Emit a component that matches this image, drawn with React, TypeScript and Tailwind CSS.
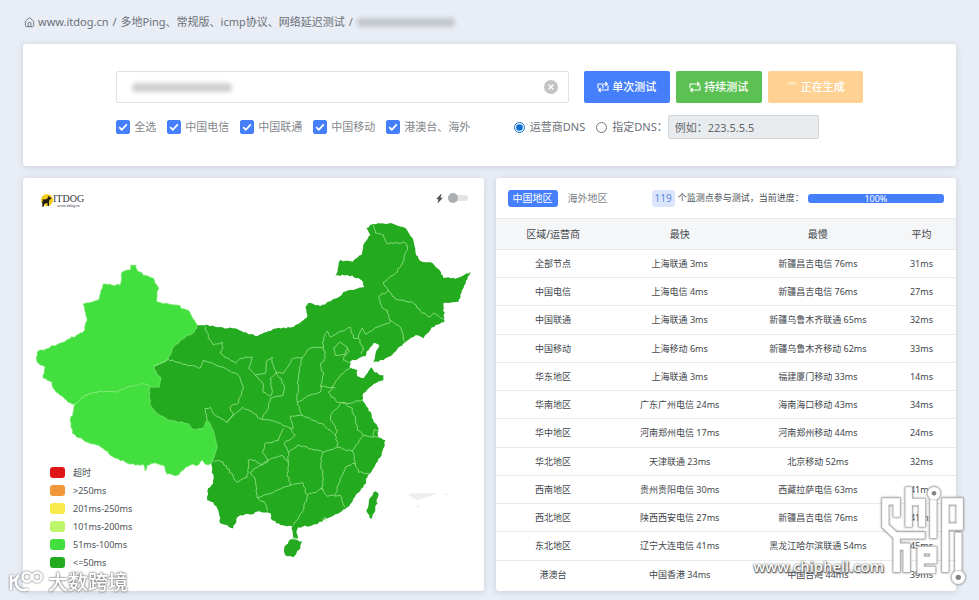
import { LuHouse } from "react-icons/lu";
import { BsLightningChargeFill } from "react-icons/bs";

type Point = [number, number];

const carriers = ["全选", "中国电信", "中国联通", "中国移动", "港澳台、海外"];

const legend = [
  { label: "超时", color: "bg-[#e01515]" },
  { label: ">250ms", color: "bg-[#f1973a]" },
  { label: "201ms-250ms", color: "bg-[#f7ea4a]" },
  { label: "101ms-200ms", color: "bg-[#bdf56b]" },
  { label: "51ms-100ms", color: "bg-[#43df3f]" },
  { label: "<=50ms", color: "bg-[#24aa1f]" },
];

const rows = [
  ["全部节点", "上海联通 3ms", "新疆昌吉电信 76ms", "31ms"],
  ["中国电信", "上海电信 4ms", "新疆昌吉电信 76ms", "27ms"],
  ["中国联通", "上海联通 3ms", "新疆乌鲁木齐联通 65ms", "32ms"],
  ["中国移动", "上海移动 6ms", "新疆乌鲁木齐移动 62ms", "33ms"],
  ["华东地区", "上海联通 3ms", "福建厦门移动 33ms", "14ms"],
  ["华南地区", "广东广州电信 24ms", "海南海口移动 43ms", "34ms"],
  ["华中地区", "河南郑州电信 17ms", "河南郑州移动 44ms", "24ms"],
  ["华北地区", "天津联通 23ms", "北京移动 52ms", "32ms"],
  ["西南地区", "贵州贵阳电信 30ms", "西藏拉萨电信 63ms", "41ms"],
  ["西北地区", "陕西西安电信 27ms", "新疆昌吉电信 76ms", "41ms"],
  ["东北地区", "辽宁大连电信 41ms", "黑龙江哈尔滨联通 54ms", "45ms"],
  ["港澳台", "中国香港 34ms", "中国台湾 44ms", "39ms"],
];

const mainland =
  "197,325 204,325 220,327 237,329 250,334 257,336 273,329 293,327 307,317 305,307 308,303 320,306 337,298 343,292 364,287 362,281 358,278 347,275 335,276 340,260 352,262 361,255 364,243 370,235 366,228 373,224 390,223 405,228 412,238 415,252 420,261 432,263 439,270 443,278 457,278 470,272 463,288 458,302 443,303 444,322 435,325 430,330 423,338 415,335 405,342 393,353 383,360 373,362 375,354 379,345 373,343 369,348 365,356 350,361 349,367 357,370 357,376 363,378 367,373 371,367 374,372 383,375 383,380 373,384 363,393 362,400 368,408 373,420 378,428 378,437 385,440 383,448 380,457 373,468 367,477 363,487 357,493 347,507 335,514 323,520 312,525 298,527 296,532 298,538 293,538 292,530 292,526 283,525 272,520 270,513 258,511 253,514 240,515 237,517 233,528 220,523 218,510 213,502 207,500 208,488 213,483 212,467 212,460 205,445 130,415 130,365";

const xinjiang =
  "130,265 136,265 137,270 143,275 153,278 158,287 157,302 177,305 189,311 197,325 194,332 188,335 182,339 174,346 168,359 154,366 157,375 161,378 159,387 150,386 143,384 127,387 117,392 97,392 85,395 75,404 68,402 58,393 53,388 52,382 43,378 45,367 37,362 37,352 50,347 63,342 83,332 87,320 83,304 98,300 103,284 120,285 122,272 130,270";

const tibet =
  "75,404 85,395 97,392 117,392 127,387 143,384 150,386 149,390 150,405 157,413 167,419 187,423 193,429 203,428 207,420 213,430 217,447 212,460 210,464 205,464 202,460 198,465 190,465 177,475 167,474 163,465 153,463 147,465 145,471 143,464 135,465 127,463 115,458 97,445 87,442 72,433 70,420 73,412";

const islands = [
  "290,539 302,541 300,548 293,557 285,555 284,547",
  "375,491 378,493 375,510 371,519 366,510 370,497",
];

const borders = [
  "168,359 177,362 200,368 203,360 223,367 238,375 243,387 238,403 230,407 233,415 227,422 215,415 210,407 205,408 207,420",
  "154,366 168,359",
  "204,325 208,337 213,345 222,342 223,348 220,353 235,363 240,358 252,357 248,368 255,375 262,382 263,392 270,396 272,392 270,378 276,372",
  "255,375 265,373 267,360 272,357 273,365 276,372",
  "276,372 283,373 293,358 302,357 310,348 323,347 323,338 327,331 330,337 350,327 353,338 358,338 362,328 365,334 377,327 390,322 387,310 382,308 378,297 388,290 383,282 397,272 402,263 407,247 403,242 387,244 383,235 375,233 373,225",
  "388,290 395,299 412,302 420,311 428,317 433,313 444,320",
  "390,320 400,327 405,342",
  "358,338 363,350 361,354",
  "340,342 347,347 345,355 335,355 333,348 340,342",
  "347,347 349,351 345,355 343,360 349,362",
  "323,347 325,357 320,365 323,375 320,386 335,388",
  "350,367 340,375 335,382 332,388 328,392 337,402 350,403 362,400",
  "302,357 298,375 297,402 310,395 320,392 321,386",
  "340,403 338,407 332,412 330,420 337,430 335,435 338,447",
  "342,403 352,408 355,420 357,430 363,435 372,437 378,437",
  "373,437 374,429 378,430",
  "297,402 302,415 320,423 330,430 335,435",
  "302,415 290,416 293,428 290,428",
  "276,372 284,385 283,395 270,398 268,408 262,419",
  "227,422 233,415 242,407 252,412 262,419 280,423 290,428",
  "290,428 295,435 284,443 288,452 288,462 282,455 268,460",
  "283,428 278,440 265,443 262,452 268,460",
  "288,452 297,445 318,450 323,452 337,447 352,451 363,435",
  "323,452 320,463 323,477 322,490",
  "352,451 355,463 345,467 340,478 335,495",
  "355,463 358,472 369,473",
  "307,495 322,488 327,496 340,495 345,507",
  "307,495 303,510 293,525",
  "307,495 302,482 290,485 273,492 257,497",
  "288,462 287,473 290,485",
  "268,460 255,468 250,472 255,480 257,497 265,503 267,511",
  "212,460 223,462 237,482 240,480 247,477 248,460 255,460 262,465 268,460",
  "292,538 298,538",
  "321,520 325,517 326,521",
];

function parse(list: string): Point[] {
  return list.split(" ").map((pair) => pair.split(",").map(Number) as Point);
}

function noise(x: number, y: number) {
  const seed = Math.sin(x * 12.9898 + y * 78.233) * 43758.5453;
  return seed - Math.floor(seed) - 0.5;
}

// Cuts a segment into short steps and nudges each one. The nudge depends only
// on the position, so provinces that share a border also share its wiggle.
function wiggle(a: Point, b: Point): Point[] {
  const steps = Math.max(1, Math.round(Math.hypot(b[0] - a[0], b[1] - a[1]) / 2.5));
  const out: Point[] = [];
  for (let i = 1; i < steps; i++) {
    const x = a[0] + ((b[0] - a[0]) * i) / steps;
    const y = a[1] + ((b[1] - a[1]) * i) / steps;
    const rx = Math.round(x * 10);
    const ry = Math.round(y * 10);
    out.push([x + noise(rx, ry) * 1.8, y + noise(ry, rx) * 1.8]);
  }
  out.push(b);
  return out;
}

function outline(list: string, closed = false) {
  const points = parse(list);
  if (closed) points.push(points[0]);
  const out: Point[] = [points[0]];
  for (let i = 1; i < points.length; i++) {
    out.push(...wiggle(points[i - 1], points[i]));
  }
  return "M" + out.map(([x, y]) => `${x.toFixed(1)} ${y.toFixed(1)}`).join("L") + (closed ? "Z" : "");
}

function ChinaMap() {
  return (
    <svg viewBox="23 214 460 377" className="block w-full" role="img" aria-label="中国地区">
      <path d={outline(mainland, true)} fill="#24aa1f" />
      {islands.map((island) => (
        <path key={island} d={outline(island, true)} fill="#24aa1f" />
      ))}
      <g fill="#43df3f" stroke="#8cec83" strokeWidth="0.6">
        <path d={outline(xinjiang, true)} />
        <path d={outline(tibet, true)} />
      </g>
      <g fill="none" stroke="#9be68f" strokeWidth="0.8" strokeLinejoin="round">
        {borders.map((border) => (
          <path key={border} d={outline(border)} />
        ))}
      </g>
      <path d="M408 495l3-2 26 0-11 4-9 3z" fill="#eeeeee" />
      <path d="M443 494l4-1v2zM416 506l2-2 1 2-2 2z" fill="#eeeeee" />
    </svg>
  );
}

function DogLogo() {
  return (
    <div className="flex items-center">
      <svg viewBox="0 0 26 26" className="size-[13px]">
        <circle cx="14" cy="12" r="12" fill="#f0cd18" />
        <path d="M18 3l1 3 4 2-2 3h-2l-1 5v8h-3v-6l-5 1-2 2v4H4l1-5-1-3 2-5-2-2 4 1 6-1 2-4z" fill="#241c16" />
      </svg>
      <div className="flex flex-col items-center font-['Liberation_Serif',serif] text-[#33373c]">
        <span className="text-[10px] leading-[10px]">ITDOG</span>
        <span className="text-[4px] leading-[3px]">www.itdog.cn</span>
      </div>
    </div>
  );
}

function LoopIcon({ once = false }: { once?: boolean }) {
  return (
    <svg viewBox="0 0 12 12" className="size-[12px]" fill="none" stroke="#fff" strokeWidth="1.100">
      <path d="M1 7.500V3h9M8.300 1l2 2-2 2M11 4.500V9H2M3.700 7l-2 2 2 2" />
      {once && <path d="M6 4.400v3.200M5 4.600h1" />}
    </svg>
  );
}

function Breadcrumb() {
  return (
    <nav className="flex h-11 items-center gap-1 px-[1px] text-[11px] text-[#6b7078]">
      <a href="#" className="flex items-center gap-[3px]">
        <LuHouse className="size-[11px]" />
        www.itdog.cn
      </a>
      <span>/</span>
      <a href="#">多地Ping、常规版、icmp协议、网络延迟测试</a>
      <span>/</span>
      <span className="h-[9px] w-[98px] rounded bg-[#c3c7ce] blur-[2px]" />
    </nav>
  );
}

function QueryForm() {
  return (
    <form className="rounded-[3px] bg-white py-[27px] shadow-[0_1px_6px_rgba(80,95,120,0.22)]">
      <div className="mx-auto flex w-4/5 items-center gap-[6px]">
        <div className="relative mr-[9px] flex-1">
          <input
            aria-label="www.itdog.cn"
            className="block h-8 w-full rounded-[2px] border border-[#dfe1e4] px-4 text-[11px] outline-none"
          />
          <span className="absolute left-4 top-3 h-[9px] w-[100px] rounded bg-[#d0d0d0] blur-[2px]" />
          <button type="button" aria-label="×" className="absolute right-[11px] top-[9px]">
            <svg viewBox="0 0 14 14" className="size-[14px]">
              <circle cx="7" cy="7" r="7" fill="#c2c3c5" />
              <path d="M4.500 4.500l5 5m0-5l-5 5" stroke="#fff" strokeWidth="1.200" />
            </svg>
          </button>
        </div>
        <button type="button" className="flex h-8 w-[86px] items-center justify-center gap-[3px] rounded-[2px] bg-[#467ffb] text-[11px] font-medium text-white">
          <LoopIcon once />
          单次测试
        </button>
        <button type="button" className="flex h-8 w-[86px] items-center justify-center gap-[3px] rounded-[2px] bg-[#5ac152] text-[11px] font-medium text-white">
          <LoopIcon />
          持续测试
        </button>
        <button type="button" className="flex h-8 w-[95px] items-center justify-center gap-[3px] rounded-[2px] bg-[#ffd294] text-[11px] font-medium text-white">
          <svg viewBox="0 0 12 12" className="size-[12px]" fill="none" stroke="#fff">
            <path d="M2 3.500a5.500 5.500 0 0 1 8 0" />
          </svg>
          正在生成
        </button>
      </div>

      <div className="mx-auto mt-3 flex w-4/5 items-center text-[11px] text-[#85888d]">
        <div className="flex gap-[11px]">
          {carriers.map((name) => (
            <label key={name} className="flex items-center gap-1 whitespace-nowrap">
              <span className="relative flex size-[14px]">
                <input type="checkbox" defaultChecked className="peer size-[14px] appearance-none rounded-[2px] border border-[#467ffb] checked:bg-[#467ffb]" />
                <svg viewBox="0 0 14 14" className="pointer-events-none absolute inset-0 hidden peer-checked:block" fill="none" stroke="#fff" strokeWidth="1.800">
                  <path d="M3.200 7.200l2.600 2.600 5-5.400" />
                </svg>
              </span>
              {name}
            </label>
          ))}
        </div>
        <div className="ml-auto mr-11 flex items-center gap-[11px] whitespace-nowrap text-[#6b7078]">
          <label className="flex items-center gap-[5px]">
            <input type="radio" name="dns" defaultChecked className="size-[11px] accent-[#0b6fd0]" />
            运营商DNS
          </label>
          <div className="flex items-center">
            <label className="flex items-center gap-[5px]">
              <input type="radio" name="dns" className="size-[11px]" />
              指定DNS：
            </label>
            <input
              aria-label="指定DNS"
              placeholder="例如：223.5.5.5"
              className="h-6 w-[151px] rounded-[2px] border border-[#d3d6da] bg-[#e9ecef] px-[6px] text-[11px] placeholder:text-[#62676d]"
            />
          </div>
        </div>
      </div>
    </form>
  );
}

function MapCard() {
  return (
    <section className="relative rounded-[3px] bg-white shadow-[0_1px_6px_rgba(80,95,120,0.22)]">
      <div className="flex h-9 items-center justify-between pl-[17px] pr-4 pt-2">
        <DogLogo />
        <div className="flex items-center gap-1 pb-1">
          <BsLightningChargeFill className="size-[9px] text-[#4d5258]" />
          <button type="button" role="switch" aria-checked="false" aria-label="⚡" className="flex h-[6px] w-5 items-center rounded-full bg-[#e3e4e6]">
            <span className="size-[10px] shrink-0 rounded-full bg-[#abafb3]" />
          </button>
        </div>
      </div>
      <ChinaMap />
      <ul className="absolute bottom-5 left-[27px] text-[9px] text-[#4c5156]">
        {legend.map((item) => (
          <li key={item.label} className="flex h-[18px] items-center gap-2">
            <span className={`h-[11px] w-[15px] rounded-[3px] ${item.color}`} />
            {item.label}
          </li>
        ))}
      </ul>
    </section>
  );
}

function ResultCard() {
  return (
    <section className="flex flex-col rounded-[3px] bg-white shadow-[0_1px_6px_rgba(80,95,120,0.22)]">
      <div className="flex h-10 items-center whitespace-nowrap px-3 text-[10px]">
        <button type="button" className="h-[17px] rounded-[3px] bg-[#467ffb] px-[5px] text-white">
          中国地区
        </button>
        <button type="button" className="ml-[10px] text-[#7b7f84]">海外地区</button>
        <span className="ml-11 flex h-[17px] items-center rounded-[3px] bg-[#dbe6fd] px-[3px] text-[#5c86df]">119</span>
        <span className="ml-[3px] text-[9px] text-[#4c5156]">个监测点参与测试，当前进度：</span>
        <div className="ml-1 flex h-[9px] flex-1 items-center justify-center rounded-[3px] bg-[#467ffb] text-[9px] leading-[9px] text-white">
          100%
        </div>
      </div>
      <div className="flex-1 pb-[3px]">
        <table className="h-full w-full table-fixed text-center text-[9px] text-[#42464b]">
          <thead>
            <tr className="h-[31px] border-y border-[#e7e9eb] bg-[#f5f6f7] text-[10px]">
              <th className="w-[25%] font-normal">区域/运营商</th>
              <th className="w-[30%] font-normal">最快</th>
              <th className="w-[30%] font-normal">最慢</th>
              <th className="w-[15%] font-normal">平均</th>
            </tr>
          </thead>
          <tbody>
            {rows.map((row) => (
              <tr key={row[0]} className="h-7 border-b border-[#e7e9eb] last:border-0">
                {row.map((cell, i) => (
                  <td key={i}>{cell}</td>
                ))}
              </tr>
            ))}
          </tbody>
        </table>
      </div>
    </section>
  );
}

function CrossBorderMark() {
  return (
    <div className="pointer-events-none absolute bottom-1 left-2 flex items-center gap-1 drop-shadow-[0_0_1px_#666]">
      <svg viewBox="0 0 36 26" className="h-[26px] w-9" fill="none" stroke="#fff" strokeWidth="2.500">
        <path d="M3 5v15M11 5c-3 3-4 5-3 9s5 8 12 5M3 12l6-4" />
        <circle cx="19" cy="7" r="4.500" />
        <circle cx="29" cy="7" r="4.500" />
      </svg>
      <span className="text-[20px] font-medium leading-6 text-white [text-shadow:0_0_1px_#888]">大数跨境</span>
    </div>
  );
}

function ChiphellMark() {
  return (
    <div className="pointer-events-none absolute bottom-[10px] right-[5px] flex items-end">
      <span className="-mr-[10px] mb-[14px] text-[15px] font-medium leading-5 text-white [text-shadow:0_0_2px_#555,1px_1px_2px_#555,0_1px_1px_#666]">
        www.chiphell.com
      </span>
      <svg viewBox="0 0 300 330" className="h-[110px] w-[100px] drop-shadow-[0_0_1px_#777]" fill="none">
        <g stroke="#b5b5b5" strokeWidth="23">
          <path d="M68 112V64H34v74l34 32v108M60 166h94M68 200h30v78" />
          <path d="M104 20v122M104 66h40v76" />
          <path d="M178 40v136" />
          <path d="M214 278V64h43v76h-43" />
          <path d="M186 270h-46v-60h38v30h-38" />
          <path d="M253 156v130" />
        </g>
        <g stroke="#fff" strokeWidth="19">
          <path d="M68 110V64H34v74l34 32v106M60 166h92M68 200h30v76" />
          <path d="M104 22v118M104 66h40v74" />
          <path d="M178 40v134" />
          <path d="M214 276V64h43v76h-43" />
          <path d="M184 270h-44v-60h38v30h-38" />
          <path d="M253 158v130" />
        </g>
        <circle cx="180" cy="40" r="20" fill="#fff" stroke="#b5b5b5" strokeWidth="2" />
        <circle cx="180" cy="40" r="7" fill="#858585" />
        <circle cx="253" cy="292" r="21" fill="#fff" stroke="#b5b5b5" strokeWidth="2" />
        <circle cx="253" cy="292" r="8" fill="#858585" />
      </svg>
    </div>
  );
}

export default function App() {
  return (
    <div className="relative min-h-screen bg-[#e9edf5] px-[23px] pb-2 font-['Noto_Sans','Noto_Sans_CJK_SC',sans-serif]">
      <Breadcrumb />
      <main className="flex flex-col gap-3">
        <QueryForm />
        <div className="grid grid-cols-2 gap-3">
          <MapCard />
          <ResultCard />
        </div>
      </main>
      <CrossBorderMark />
      <ChiphellMark />
    </div>
  );
}
